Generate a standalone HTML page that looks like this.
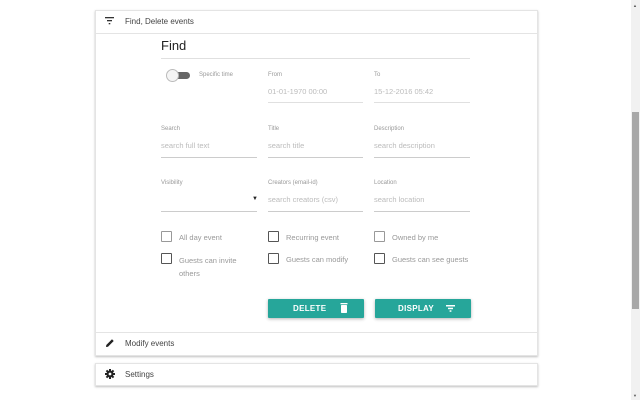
<!DOCTYPE html>
<html><head><meta charset="utf-8"><style>
*{margin:0;padding:0;box-sizing:border-box}
body{width:640px;height:400px;background:#fff;font-family:"Liberation Sans",sans-serif;position:relative;overflow:hidden;color:#222}
.a{position:absolute}
.card{position:absolute;left:95px;width:443px;background:#fff;box-shadow:0 1px 2px rgba(0,0,0,.25);border:1px solid #e4e4e4}
.hd{font-size:8px;color:#444}
.lbl{font-size:6px;color:#999}
.ph{font-size:7.5px;color:#bbb}
.ul{height:1px;background:#ccc}
.cb{width:11px;height:11px;border:1.3px solid #555;border-radius:1px}
.ct{font-size:7.5px;color:#999}
.btn{position:absolute;height:19px;width:96px;background:#26a69a;box-shadow:0 1px 3px rgba(0,0,0,.3);color:#fff;font-size:8px;font-weight:bold;letter-spacing:.3px;border-radius:1px}
</style></head><body>
<div class="card" style="top:10px;height:346px"></div>
<div class="a" style="left:96px;top:33px;width:441px;height:1px;background:#e4e4e4"></div>
<div class="a" style="left:96px;top:332px;width:441px;height:1px;background:#e4e4e4"></div>
<svg class="a" style="left:105px;top:17px" width="10" height="8"><rect x="0" y="0" width="9" height="1.3" fill="#333"/><rect x="2" y="3" width="5" height="1.3" fill="#333"/><rect x="3.7" y="6" width="1.6" height="1.3" fill="#333"/></svg>
<div class="a hd" style="left:125px;top:17px">Find, Delete events</div>
<div class="a" style="left:161px;top:38px;font-size:13px;color:#222">Find</div>
<div class="a" style="left:161px;top:58px;width:309px;height:1px;background:#e0e0e0"></div>
<div class="a" style="left:170px;top:72px;width:20px;height:7px;border-radius:4px;background:#666"></div>
<div class="a" style="left:166px;top:69px;width:13px;height:13px;border-radius:50%;background:#f5f5f5;border:1px solid #bbb"></div>
<div class="a lbl" style="left:199px;top:72px">Specific time</div>
<div class="a lbl" style="left:268px;top:72px">From</div>
<div class="a ph" style="left:268px;top:87px">01-01-1970 00:00</div>
<div class="a ul" style="left:268px;top:102px;width:95px;background:#e0e0e0"></div>
<div class="a lbl" style="left:374px;top:72px">To</div>
<div class="a ph" style="left:374px;top:87px">15-12-2016 05:42</div>
<div class="a ul" style="left:374px;top:102px;width:96px;background:#e0e0e0"></div>

<div class="a lbl" style="left:161px;top:126px">Search</div>
<div class="a ph" style="left:161px;top:141px">search full text</div>
<div class="a ul" style="left:161px;top:157px;width:96px"></div>
<div class="a lbl" style="left:268px;top:126px">Title</div>
<div class="a ph" style="left:268px;top:141px">search title</div>
<div class="a ul" style="left:268px;top:157px;width:95px"></div>
<div class="a lbl" style="left:374px;top:126px">Description</div>
<div class="a ph" style="left:374px;top:141px">search description</div>
<div class="a ul" style="left:374px;top:157px;width:96px"></div>

<div class="a lbl" style="left:161px;top:180px">Visibility</div>
<div class="a" style="left:252px;top:196px;font-size:6px;color:#222">▼</div>
<div class="a ul" style="left:161px;top:211px;width:96px"></div>
<div class="a lbl" style="left:268px;top:180px">Creators (email-id)</div>
<div class="a ph" style="left:268px;top:195px">search creators (csv)</div>
<div class="a ul" style="left:268px;top:211px;width:95px"></div>
<div class="a lbl" style="left:374px;top:180px">Location</div>
<div class="a ph" style="left:374px;top:195px">search location</div>
<div class="a ul" style="left:374px;top:211px;width:96px"></div>

<div class="a cb" style="left:161px;top:231px;border-color:#999"></div>
<div class="a ct" style="left:179px;top:233px">All day event</div>
<div class="a cb" style="left:268px;top:231px"></div>
<div class="a ct" style="left:286px;top:233px">Recurring event</div>
<div class="a cb" style="left:374px;top:231px;border-color:#999"></div>
<div class="a ct" style="left:392px;top:233px">Owned by me</div>
<div class="a cb" style="left:161px;top:253px"></div>
<div class="a ct" style="left:179px;top:255px;line-height:12.5px">Guests can invite<br>others</div>
<div class="a cb" style="left:268px;top:253px"></div>
<div class="a ct" style="left:286px;top:255px">Guests can modify</div>
<div class="a cb" style="left:374px;top:253px"></div>
<div class="a ct" style="left:392px;top:255px">Guests can see guests</div>

<div class="btn" style="left:268px;top:299px"><span class="a" style="left:25px;top:5px">DELETE</span><svg class="a" style="left:72px;top:4px" width="8" height="10"><rect x="0.5" y="0" width="7" height="1.3" fill="#fff"/><rect x="1" y="2" width="6" height="8" rx="0.7" fill="#fff"/></svg></div>
<div class="btn" style="left:375px;top:299px"><span class="a" style="left:23px;top:5px">DISPLAY</span><svg class="a" style="left:71px;top:6px" width="9" height="7"><rect x="0" y="0" width="9" height="1.5" fill="#fff"/><rect x="2" y="2.7" width="5" height="1.5" fill="#fff"/><rect x="3.6" y="5.3" width="1.8" height="1.5" fill="#fff"/></svg></div>

<svg class="a" style="left:105px;top:338px" width="10" height="10"><path d="M1 9 L1.3 7 L7 1.3 L8.7 3 L3 8.7 Z" fill="#222"/></svg>
<div class="a hd" style="left:125px;top:339px">Modify events</div>

<div class="card" style="top:363px;height:23px"></div>
<svg class="a" style="left:105px;top:369px" width="10" height="10" viewBox="0 0 10 10"><g fill="#222"><circle cx="5" cy="5" r="3.5"/><rect x="4" y="0" width="2" height="10"/><rect x="0" y="4" width="10" height="2"/><rect x="4" y="0" width="2" height="10" transform="rotate(45 5 5)"/><rect x="4" y="0" width="2" height="10" transform="rotate(-45 5 5)"/></g><circle cx="5" cy="5" r="1.4" fill="#fff"/></svg>
<div class="a hd" style="left:125px;top:370px">Settings</div>

<div class="a" style="left:631px;top:0;width:9px;height:400px;background:#f1f1f1"></div>
<div class="a" style="left:632px;top:112px;width:7px;height:197px;background:#a8a8a8"></div>
<div class="a" style="left:633px;top:3px;font-size:4px;color:#555">▲</div>
<div class="a" style="left:633px;top:393px;font-size:4px;color:#555">▼</div>
</body></html>
